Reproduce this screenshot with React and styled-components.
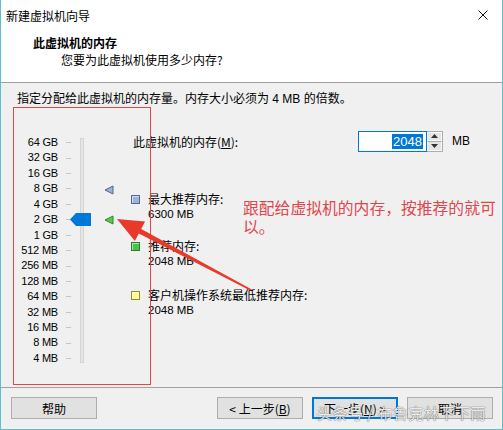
import React from "react";
import styled, { createGlobalStyle } from "styled-components";

const GlobalStyle = createGlobalStyle`
  html, body { margin: 0; padding: 0; background: #f0f0f0; }
  body {
    font-family: "Liberation Sans", "Noto Sans CJK SC", sans-serif;
    font-size: 12px;
    color: #000;
  }
  * { box-sizing: border-box; }
`;

const Window = styled.div`
  position: relative;
  width: 503px;
  height: 430px;
  display: flex;
  flex-direction: column;
  background: #f0f0f0;
  border: 1px solid #5bbfd2;
  border-top: none;
  overflow: hidden;
`;

const TitleBar = styled.div`
  height: 30px;
  flex: none;
  display: flex;
  align-items: center;
  justify-content: space-between;
  background: #fff;
  padding: 0 10px 0 5px;
`;

const TitleText = styled.span`
  font-family: "Noto Sans CJK SC", sans-serif;
  font-size: 12px;
`;

const CloseGlyph = styled.svg`
  width: 10px;
  height: 10px;
  margin-right: 4px;
`;

const Header = styled.div`
  flex: none;
  height: 53px;
  background: #fff;
  border-bottom: 1px solid #a0a0a0;
  padding: 4px 0 0 32px;
  display: flex;
  flex-direction: column;
`;

const HeaderTitle = styled.div`
  font-family: "Noto Sans CJK SC", sans-serif;
  font-weight: bold;
  font-size: 12px;
  line-height: 17px;
`;

const HeaderSub = styled.div`
  font-family: "Noto Sans CJK SC", sans-serif;
  font-size: 12px;
  line-height: 17px;
  padding-left: 28px;
`;

const Body = styled.div`
  flex: 1;
  display: flex;
  flex-direction: column;
  padding-top: 8px;
  border-bottom: 1px solid #a0a0a0;
`;

const Intro = styled.div`
  font-family: "Liberation Sans", "Noto Sans CJK SC", sans-serif;
  line-height: 17px;
  padding-left: 16px;
`;

const Content = styled.div`
  display: flex;
  margin-top: 24px;
`;

/* ---- memory scale ---- */
const ROW = 15.43;
const stops = [
  "64 GB", "32 GB", "16 GB", "8 GB", "4 GB", "2 GB", "1 GB",
  "512 MB", "256 MB", "128 MB", "64 MB", "32 MB", "16 MB", "8 MB", "4 MB",
];
const yForMb = (mb) => (16 - Math.log2(mb)) * ROW + ROW / 2;

const Scale = styled.div`
  position: relative;
  display: flex;
  flex: none;
  width: 130px;
  padding-top: 3px;
`;

const LabelCol = styled.div`
  width: 57px;
  display: flex;
  flex-direction: column;
  align-items: flex-end;
`;

const StopLabel = styled.div`
  height: ${ROW}px;
  line-height: ${ROW}px;
  font-family: "Liberation Sans", sans-serif;
  font-size: 11px;
  letter-spacing: -0.2px;
`;

const TickCol = styled.div`
  width: 5px;
  margin-left: 8px;
  display: flex;
  flex-direction: column;
`;

const Tick = styled.div`
  height: ${ROW}px;
  display: flex;
  align-items: center;
  &::after {
    content: "";
    display: block;
    width: 5px;
    height: 1px;
    background: #c4c4c4;
  }
`;

const TrackCol = styled.div`
  position: relative;
  width: 4px;
  margin-left: 9px;
  padding: 3px 0;
  display: flex;
`;

const Track = styled.div`
  flex: 1;
  background: #e6e6e6;
  border: 1px solid #d4d4d4;
`;

const Thumb = styled.svg`
  position: absolute;
  left: -10px;
  width: 21px;
  height: 13px;
`;

const MarkerCol = styled.div`
  position: relative;
  width: 10px;
  margin-left: 20px;
`;

const Marker = styled.svg`
  position: absolute;
  left: 0;
  width: 10px;
  height: 10px;
`;

/* ---- memory details ---- */
const Details = styled.div`
  flex: 1;
  display: flex;
  flex-direction: column;
`;

const AmountRow = styled.div`
  display: flex;
  align-items: center;
  height: 22px;
  margin-top: -2px;
  padding-left: 2px;
`;

const AmountLabel = styled.span`
  font-family: "Noto Sans CJK SC", sans-serif;
  width: 225px;
  u { text-decoration: underline; }
`;

const Spin = styled.div`
  display: flex;
  height: 21px;
`;

const SpinInput = styled.div`
  width: 69px;
  border: 1px solid #0078d7;
  background: #fff;
  display: flex;
  align-items: center;
  justify-content: flex-end;
  padding-right: 3px;
`;

const Selected = styled.span`
  background: #0078d7;
  color: #fff;
  font-family: "Liberation Sans", sans-serif;
  font-size: 13px;
  line-height: 15px;
  padding: 0 1px;
`;

const SpinButtons = styled.div`
  width: 16px;
  display: flex;
  flex-direction: column;
  border: 1px solid #adadad;
  border-left: none;
  background: #f0f0f0;
`;

const SpinHalf = styled.div`
  flex: 1;
  display: flex;
  align-items: center;
  justify-content: center;
  background: #e5e5e5;
  border: 1px solid #f8f8f8;
  & + & { border-top: 1px solid #adadad; }
`;

const Unit = styled.span`
  font-family: "Liberation Sans", sans-serif;
  margin-left: 9px;
`;

const Legend = styled.div`
  display: flex;
  flex-direction: column;
  margin-top: ${(p) => p.$gap}px;
`;

const LegendHead = styled.div`
  display: flex;
  align-items: center;
  line-height: 16px;
  font-family: "Noto Sans CJK SC", sans-serif;
`;

const Swatch = styled.span`
  width: 9px;
  height: 9px;
  margin: 0 8px 0 0;
  background: ${(p) => p.$fill};
  border: 1px solid ${(p) => p.$edge};
  box-shadow: inset 1px 1px 0 rgba(255, 255, 255, 0.55);
`;

const LegendValue = styled.div`
  padding-left: 17px;
  line-height: 15px;
  font-family: "Liberation Sans", sans-serif;
  font-size: 11.5px;
`;

/* ---- buttons ---- */
const Footer = styled.div`
  flex: none;
  height: 41px;
  display: flex;
  align-items: flex-start;
  justify-content: space-between;
  padding: 9px 9px 0 10px;
`;

const ButtonGroup = styled.div`
  display: flex;
  gap: 9px;
`;

const Button = styled.div`
  width: 86px;
  height: 22px;
  display: flex;
  align-items: center;
  justify-content: center;
  background: #e1e1e1;
  border: 1px solid ${(p) => (p.$primary ? "#0078d7" : "#adadad")};
  box-shadow: ${(p) => (p.$primary ? "inset 0 0 0 1px #0078d7" : "none")};
  font-family: "Noto Sans CJK SC", sans-serif;
  font-size: 12px;
  u { text-decoration: underline; }
`;

/* ---- hand-drawn notes on top of the dialog ---- */
const Notes = styled.div`
  position: absolute;
  inset: 0;
  pointer-events: none;
`;

const NoteBox = styled.div`
  position: absolute;
  left: 12px;
  top: 107px;
  width: 138px;
  height: 278px;
  border: 1px solid #e0474c;
`;

const NoteText = styled.div`
  position: absolute;
  left: 242px;
  top: 198px;
  width: 260px;
  font-family: "Noto Sans CJK SC", sans-serif;
  font-size: 15.8px;
  line-height: 19px;
  color: #e0464e;
`;

const NoteArrow = styled.svg`
  position: absolute;
  left: 0;
  top: 0;
  width: 503px;
  height: 430px;
`;

const Watermark = styled.div`
  position: absolute;
  left: 316px;
  top: 402px;
  font-family: "Noto Sans CJK SC", sans-serif;
  font-size: 15px;
  color: rgba(255, 255, 255, 0.9);
  text-shadow: 0 0 1px rgba(60, 60, 60, 0.7), 0 0 1px rgba(60, 60, 60, 0.7);
  letter-spacing: 0.5px;
`;

const legendItems = [
  { label: "最大推荐内存:", value: "6300 MB", fill: "#9ab3da", edge: "#55698c", gap: 39 },
  { label: "推荐内存:", value: "2048 MB", fill: "#4bc24b", edge: "#2b7d2b", gap: 16 },
  { label: "客户机操作系统最低推荐内存:", value: "2048 MB", fill: "#ffff88", edge: "#8c8c3c", gap: 18 },
];

export default function App() {
  const thumbY = yForMb(2048) - 6.5 - 3;
  return (
    <>
      <GlobalStyle />
      <Window>
        <TitleBar>
          <TitleText>新建虚拟机向导</TitleText>
          <CloseGlyph viewBox="0 0 10 10">
            <path d="M0.5 0.5 L9.5 9.5 M9.5 0.5 L0.5 9.5" stroke="#111" strokeWidth="1" />
          </CloseGlyph>
        </TitleBar>
        <Header>
          <HeaderTitle>此虚拟机的内存</HeaderTitle>
          <HeaderSub>您要为此虚拟机使用多少内存?</HeaderSub>
        </Header>
        <Body>
          <Intro>指定分配给此虚拟机的内存量。内存大小必须为 4 MB 的倍数。</Intro>
          <Content>
            <Scale>
              <LabelCol>
                {stops.map((s) => (
                  <StopLabel key={s}>{s}</StopLabel>
                ))}
              </LabelCol>
              <TickCol>
                {stops.map((s) => (
                  <Tick key={s} />
                ))}
              </TickCol>
              <TrackCol>
                <Track />
                <Thumb viewBox="0 0 21 13" style={{ top: thumbY + 3 }}>
                  <path d="M0 6.5 L6 0 H21 V13 H6 Z" fill="#0078d7" />
                </Thumb>
              </TrackCol>
              <MarkerCol>
                <Marker viewBox="0 0 10 10" style={{ top: yForMb(6300) - 10 }}>
                  <path d="M1 5 L9 1 V9 Z" fill="#9ab3da" stroke="#4e6790" strokeWidth="1" />
                </Marker>
                <Marker viewBox="0 0 10 10" style={{ top: yForMb(2048) - 5 }}>
                  <path d="M1 5 L9 1 V9 Z" fill="#5cc84a" stroke="#268a26" strokeWidth="1" />
                </Marker>
              </MarkerCol>
            </Scale>
            <Details>
              <AmountRow>
                <AmountLabel>
                  此虚拟机的内存(<u>M</u>):
                </AmountLabel>
                <Spin>
                  <SpinInput>
                    <Selected>2048</Selected>
                  </SpinInput>
                  <SpinButtons>
                    <SpinHalf>
                      <svg width="7" height="4" viewBox="0 0 7 4">
                        <path d="M0 4 L3.5 0 L7 4 Z" fill="#333" />
                      </svg>
                    </SpinHalf>
                    <SpinHalf>
                      <svg width="7" height="4" viewBox="0 0 7 4">
                        <path d="M0 0 L3.5 4 L7 0 Z" fill="#333" />
                      </svg>
                    </SpinHalf>
                  </SpinButtons>
                </Spin>
                <Unit>MB</Unit>
              </AmountRow>
              {legendItems.map((it) => (
                <Legend key={it.label} $gap={it.gap}>
                  <LegendHead>
                    <Swatch $fill={it.fill} $edge={it.edge} />
                    {it.label}
                  </LegendHead>
                  <LegendValue>{it.value}</LegendValue>
                </Legend>
              ))}
            </Details>
          </Content>
        </Body>
        <Footer>
          <Button>帮助</Button>
          <ButtonGroup>
            <Button>
              &lt; 上一步(<u>B</u>)
            </Button>
            <Button $primary>
              下一步(<u>N</u>) &gt;
            </Button>
            <Button>取消</Button>
          </ButtonGroup>
        </Footer>
        <Notes>
          <NoteBox />
          <NoteText>
            跟配给虚拟机的内存，按推荐的就可
            <br />
            以。
          </NoteText>
          <NoteArrow viewBox="0 0 503 430">
            <path
              d="M116 219 L144.1 221.5 L140.2 229 L250.4 289.3 L249.6 290.7 L137.8 233.4 L133.9 240.9 Z"
              fill="#e8392b"
            />
          </NoteArrow>
          <Watermark>头条号 / 布鲁克林下下雨</Watermark>
        </Notes>
      </Window>
    </>
  );
}
